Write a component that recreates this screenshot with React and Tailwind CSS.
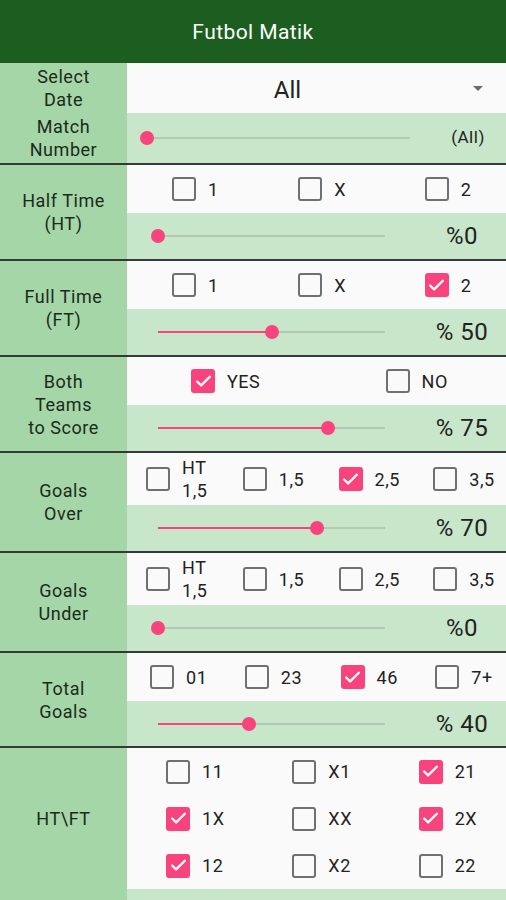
import { Check } from "lucide-react";

const font = { fontFamily: "Roboto, 'Noto Sans', sans-serif" };

function Box({ checked, label }) {
  return (
    <div className="flex items-center gap-3">
      {checked ? (
        <div className="flex h-[24px] w-[24px] shrink-0 items-center justify-center rounded-[3px] bg-[#f8437c]">
          <Check size={19} strokeWidth={3} className="text-white" />
        </div>
      ) : (
        <div className="h-[24px] w-[24px] shrink-0 rounded-[3px] border-[2.5px] border-[#707070]" />
      )}
      <span className="text-[18px] leading-[23px] tracking-[0.03em] text-[#222]">{label}</span>
    </div>
  );
}

function Slider({ value, text, start = "pl-[31px]", track = "w-[227px]", textBox = "w-[88px] text-[24px] tracking-[0.02em]" }) {
  return (
    <div className={`flex h-full items-center ${start}`}>
      <div className={`relative h-[14px] ${track}`}>
        <div className="absolute left-0 right-0 top-[6px] h-[2px] bg-[#b4c9b5]" />
        <div
          className="absolute left-0 top-[6px] h-[2px] bg-[#f8437c]"
          style={{ width: `${value}%` }}
        />
        <div
          className="absolute top-0 h-[14px] w-[14px] -translate-x-1/2 rounded-full bg-[#f8437c]"
          style={{ left: `${value}%` }}
        />
      </div>
      <div className="flex-1" />
      <div className={`text-center text-[#222] ${textBox}`}>{text}</div>
    </div>
  );
}

function Label({ children }) {
  return (
    <div className="flex w-[127px] shrink-0 items-center justify-center bg-[#a5d6a7] text-center text-[18px] leading-[23px] tracking-[0.03em] text-[#1c2a1c]">
      <div>{children}</div>
    </div>
  );
}

function Divider() {
  return <div className="h-[2px] bg-[#363a36]" />;
}

function Section({ label, topH, bottomH, top, slider }) {
  return (
    <>
      <div className="flex">
        <Label>{label}</Label>
        <div className="flex flex-1 flex-col">
          <div className={`bg-[#fafafa] ${topH}`}>{top}</div>
          <div className={`bg-[#c8e6c9] ${bottomH}`}>{slider}</div>
        </div>
      </div>
      <Divider />
    </>
  );
}

function Ht15() {
  return (
    <span className="block">
      HT
      <br />
      1,5
    </span>
  );
}

export default function App() {
  return (
    <div className="h-[900px] w-[506px] overflow-hidden bg-[#c8e6c9]" style={font}>
      <div className="flex h-[63px] items-center justify-center bg-[#1b5e20] pt-[3px] text-[21px] tracking-[0.02em] text-white">
        Futbol Matik
      </div>

      {/* Date + match number */}
      <div className="flex">
        <div className="flex w-[127px] shrink-0 flex-col bg-[#a5d6a7] text-center text-[18px] leading-[23px] tracking-[0.03em] text-[#1c2a1c]">
          <div className="flex h-[50px] items-center justify-center">
            <div>
              Select
              <br />
              Date
            </div>
          </div>
          <div className="flex h-[50px] items-center justify-center">
            <div>
              Match
              <br />
              Number
            </div>
          </div>
        </div>
        <div className="flex flex-1 flex-col">
          <div className="flex h-[50px] items-center bg-[#fafafa]">
            <div className="flex-1 pl-[2px] pt-[3px] text-center text-[24px] text-[#222]">All</div>
            <div className="flex w-[60px] justify-center pl-[3px]">
              <div className="h-0 w-0 border-l-[5px] border-r-[5px] border-t-[5px] border-l-transparent border-r-transparent border-t-[#6b6b6b]" />
            </div>
          </div>
          <div className="h-[50px] bg-[#c8e6c9]">
            <Slider
              value={0}
              text="(All)"
              start="pl-[20px]"
              track="w-[263px]"
              textBox="w-[76px] text-[17px] tracking-[0.03em]"
            />
          </div>
        </div>
      </div>
      <Divider />

      <Section
        label={<>Half Time<br />(HT)</>}
        topH="h-[48px]"
        bottomH="h-[46px]"
        top={
          <div className="grid h-full grid-cols-3 items-center">
            <div className="pl-[45px]"><Box label="1" /></div>
            <div className="pl-[45px]"><Box label="X" /></div>
            <div className="pl-[45px]"><Box label="2" /></div>
          </div>
        }
        slider={<Slider value={0} text="%0" />}
      />

      <Section
        label={<>Full Time<br />(FT)</>}
        topH="h-[48px]"
        bottomH="h-[46px]"
        top={
          <div className="grid h-full grid-cols-3 items-center">
            <div className="pl-[45px]"><Box label="1" /></div>
            <div className="pl-[45px]"><Box label="X" /></div>
            <div className="pl-[45px]"><Box label="2" checked /></div>
          </div>
        }
        slider={<Slider value={50} text="% 50" />}
      />

      <Section
        label={<>Both<br />Teams<br />to Score</>}
        topH="h-[48px]"
        bottomH="h-[46px]"
        top={
          <div className="grid h-full grid-cols-2 items-center">
            <div className="pl-[64px]"><Box label="YES" checked /></div>
            <div className="pl-[69px]"><Box label="NO" /></div>
          </div>
        }
        slider={<Slider value={75} text="% 75" />}
      />

      <Section
        label={<>Goals<br />Over</>}
        topH="h-[52px]"
        bottomH="h-[46px]"
        top={
          <div className="grid h-full grid-cols-4 items-center">
            <div className="pl-[19px]"><Box label={<Ht15 />} /></div>
            <div className="pl-[21px]"><Box label="1,5" /></div>
            <div className="pl-[22px]"><Box label="2,5" checked /></div>
            <div className="pl-[22px]"><Box label="3,5" /></div>
          </div>
        }
        slider={<Slider value={70} text="% 70" />}
      />

      <Section
        label={<>Goals<br />Under</>}
        topH="h-[52px]"
        bottomH="h-[46px]"
        top={
          <div className="grid h-full grid-cols-4 items-center">
            <div className="pl-[19px]"><Box label={<Ht15 />} /></div>
            <div className="pl-[21px]"><Box label="1,5" /></div>
            <div className="pl-[22px]"><Box label="2,5" /></div>
            <div className="pl-[22px]"><Box label="3,5" /></div>
          </div>
        }
        slider={<Slider value={0} text="%0" />}
      />

      <Section
        label={<>Total<br />Goals</>}
        topH="h-[48px]"
        bottomH="h-[45px]"
        top={
          <div className="grid h-full grid-cols-4 items-center">
            <div className="pl-[23px]"><Box label="01" /></div>
            <div className="pl-[23px]"><Box label="23" /></div>
            <div className="pl-[24px]"><Box label="46" checked /></div>
            <div className="pl-[24px]"><Box label="7+" /></div>
          </div>
        }
        slider={<Slider value={40} text="% 40" />}
      />

      {/* HT\FT */}
      <div className="flex">
        <Label>HT\FT</Label>
        <div className="flex-1 bg-[#fafafa]">
          <div className="grid h-[141px] grid-cols-3 content-center gap-y-[23px]">
            {[
              ["11", false],
              ["X1", false],
              ["21", true],
              ["1X", true],
              ["XX", false],
              ["2X", true],
              ["12", true],
              ["X2", false],
              ["22", false],
            ].map(([l, c]) => (
              <div key={l} className="pl-[39px]">
                <Box label={l} checked={c} />
              </div>
            ))}
          </div>
        </div>
      </div>
      <div className="flex h-[20px]">
        <div className="w-[127px] bg-[#a5d6a7]" />
        <div className="flex-1 bg-[#c8e6c9]" />
      </div>
    </div>
  );
}
